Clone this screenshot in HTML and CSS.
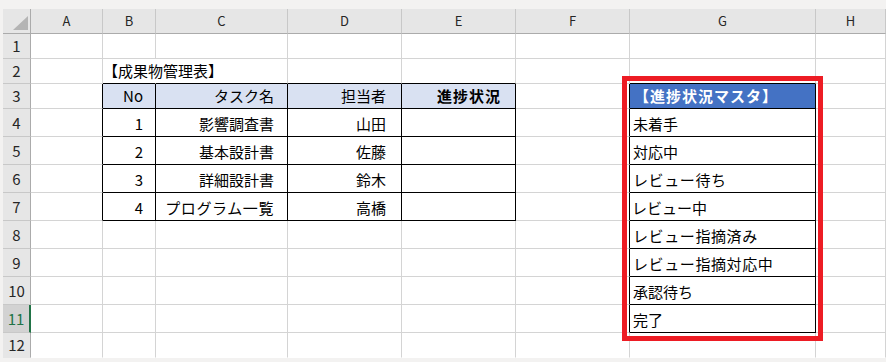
FILE: index.html
```html
<!DOCTYPE html>
<html lang="ja">
<head>
<meta charset="utf-8">
<title>成果物管理表</title>
<link rel="stylesheet" href="styles.css">
</head>
<body>
<div class="wrap">
  <div class="grid">
    <div class="cell corner"><div class="tri"></div></div>
    <div class="cell ch">A</div>
    <div class="cell ch">B</div>
    <div class="cell ch">C</div>
    <div class="cell ch">D</div>
    <div class="cell ch">E</div>
    <div class="cell ch">F</div>
    <div class="cell ch">G</div>
    <div class="cell ch">H</div>

    <div class="cell rh">1</div>
    <div class="cell"></div><div class="cell"></div><div class="cell"></div><div class="cell"></div>
    <div class="cell"></div><div class="cell"></div><div class="cell"></div><div class="cell"></div>

    <div class="cell rh">2</div>
    <div class="cell"></div>
    <div class="cell bb title">【成果物管理表】</div>
    <div class="cell bb"></div>
    <div class="cell bb"></div>
    <div class="cell bb"></div>
    <div class="cell"></div>
    <div class="cell bb"></div>
    <div class="cell"></div>

    <div class="cell rh">3</div>
    <div class="cell br"></div>
    <div class="cell t th pb">No</div>
    <div class="cell t th pc">タスク名</div>
    <div class="cell t th pd">担当者</div>
    <div class="cell t th pe strong">進捗状況</div>
    <div class="cell br"></div>
    <div class="cell t mh pg">【進捗状況マスタ】</div>
    <div class="cell"></div>

    <div class="cell rh">4</div>
    <div class="cell br"></div>
    <div class="cell t pb">1</div>
    <div class="cell t pc">影響調査書</div>
    <div class="cell t pd">山田</div>
    <div class="cell t"></div>
    <div class="cell br"></div>
    <div class="cell t pg">未着手</div>
    <div class="cell"></div>

    <div class="cell rh">5</div>
    <div class="cell br"></div>
    <div class="cell t pb">2</div>
    <div class="cell t pc">基本設計書</div>
    <div class="cell t pd">佐藤</div>
    <div class="cell t"></div>
    <div class="cell br"></div>
    <div class="cell t pg">対応中</div>
    <div class="cell"></div>

    <div class="cell rh">6</div>
    <div class="cell br"></div>
    <div class="cell t pb">3</div>
    <div class="cell t pc">詳細設計書</div>
    <div class="cell t pd">鈴木</div>
    <div class="cell t"></div>
    <div class="cell br"></div>
    <div class="cell t pg kana">レビュー待ち</div>
    <div class="cell"></div>

    <div class="cell rh">7</div>
    <div class="cell br"></div>
    <div class="cell t pb">4</div>
    <div class="cell t pc kana">プログラム一覧</div>
    <div class="cell t pd">高橋</div>
    <div class="cell t"></div>
    <div class="cell br"></div>
    <div class="cell t pg tight">レビュー中</div>
    <div class="cell"></div>

    <div class="cell rh">8</div>
    <div class="cell"></div><div class="cell"></div><div class="cell"></div><div class="cell"></div><div class="cell"></div>
    <div class="cell br"></div>
    <div class="cell t pg kana">レビュー指摘済み</div>
    <div class="cell"></div>

    <div class="cell rh">9</div>
    <div class="cell"></div><div class="cell"></div><div class="cell"></div><div class="cell"></div><div class="cell"></div>
    <div class="cell br"></div>
    <div class="cell t pg kana">レビュー指摘対応中</div>
    <div class="cell"></div>

    <div class="cell rh">10</div>
    <div class="cell"></div><div class="cell"></div><div class="cell"></div><div class="cell"></div><div class="cell"></div>
    <div class="cell br"></div>
    <div class="cell t pg">承認待ち</div>
    <div class="cell"></div>

    <div class="cell rh sel">11</div>
    <div class="cell"></div><div class="cell"></div><div class="cell"></div><div class="cell"></div><div class="cell"></div>
    <div class="cell br"></div>
    <div class="cell t pg">完了</div>
    <div class="cell"></div>

    <div class="cell rh last">12</div>
    <div class="cell last"></div><div class="cell last"></div><div class="cell last"></div><div class="cell last"></div>
    <div class="cell last"></div><div class="cell last"></div><div class="cell last"></div><div class="cell last"></div>
  </div>
  <div class="highlight"></div>
</div>
</body>
</html>
```
FILE: styles.css
```css
html, body {
  margin: 0;
  padding: 0;
}
body {
  width: 886px;
  height: 362px;
  overflow: hidden;
  background: #f3f2f1;
  font-family: "Noto Sans CJK JP", "Noto Sans", sans-serif;
}
.wrap {
  position: relative;
  padding: 9px 0 0 3px;
}
.grid {
  display: grid;
  grid-template-columns: 28px 72px 53px 132px 114px 114px 114px 186px 70px;
  grid-template-rows: 25px 25px 25px 25px repeat(8, 28px) 25px;
  background: #ffffff;
}
.cell {
  box-sizing: border-box;
  min-width: 0;
  display: flex;
  align-items: flex-end;
  border-right: 1px solid #d4d4d4;
  border-bottom: 1px solid #d4d4d4;
  padding-bottom: 2px;
  font-size: 15px;
  line-height: 20px;
  white-space: nowrap;
  color: #000000;
}
.cell.last {
  border-bottom-color: transparent;
}
.ch, .rh, .corner {
  background: #e6e6e6;
  align-items: center;
  justify-content: center;
  padding: 0;
  color: #262626;
}
.ch {
  font-size: 13px;
  border-right-color: #c8c8c8;
  border-bottom-color: #ababab;
}
.corner {
  border-right-color: #ababab;
  border-bottom-color: #ababab;
  align-items: flex-end;
  justify-content: flex-end;
}
.tri {
  width: 15px;
  height: 14px;
  margin: 0 2px 3px 0;
  background: #b4b4b4;
  clip-path: polygon(100% 0, 100% 100%, 0 100%);
}
.rh {
  font-size: 15px;
  border-right-color: #ababab;
  border-bottom-color: #c8c8c8;
}
.rh.last {
  border-bottom-color: transparent;
}
.rh.sel {
  background: #d2d2d2;
  color: #217346;
  border-right: 2px solid #217346;
}
.br {
  border-right-color: #000000;
}
.bb {
  border-bottom-color: #000000;
}
.t {
  border-right-color: #000000;
  border-bottom-color: #000000;
}
.title {
  border-right-color: #ffffff;
  padding-left: 0;
}
.th {
  background: #d9e1f2;
}
.mh {
  background: #4472c4;
  color: #ffffff;
  font-weight: 700;
  letter-spacing: 1px;
}
.strong {
  font-weight: 700;
  letter-spacing: 1px;
}
.pb {
  justify-content: flex-end;
  padding-right: 12px;
}
.pc {
  justify-content: flex-end;
  padding-right: 13px;
}
.pd {
  justify-content: flex-end;
  padding-right: 15px;
}
.pe {
  justify-content: flex-end;
  padding-right: 14px;
}
.pg {
  justify-content: flex-start;
  padding-left: 3px;
}
.mh.pg {
  padding-left: 4px;
}
.kana {
  letter-spacing: 0.6px;
}
.tight {
  padding-left: 2px;
}
.highlight {
  position: absolute;
  left: 622px;
  top: 76px;
  width: 201px;
  height: 265px;
  box-sizing: border-box;
  border: 5px solid #ed1c24;
}
```
